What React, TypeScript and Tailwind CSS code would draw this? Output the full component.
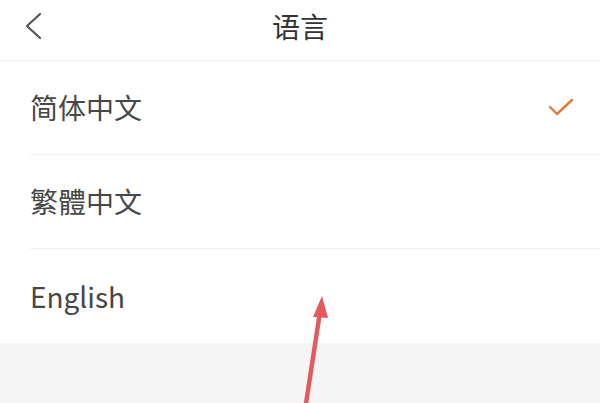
import React from 'react';

const font = { fontFamily: '"Noto Sans CJK SC", "Noto Sans", sans-serif' };

const languages = [
  { label: '简体中文', selected: true },
  { label: '繁體中文', selected: false },
  { label: 'English', selected: false },
];

export default function App() {
  return (
    <div className="relative w-[600px] h-[403px] overflow-hidden bg-[#f5f5f5] text-[#333]" style={font}>
      <div className="bg-white">
        <div className="relative h-[61px] flex items-center justify-center border-b border-[#f2f2f2]">
          <svg className="absolute left-[22px] top-[12px]" width="22" height="28" viewBox="0 0 22 28" fill="none">
            <path d="M18 2 L5 14 L18 26" stroke="#555" strokeWidth="2.2" strokeLinecap="round" strokeLinejoin="round" />
          </svg>
          <span className="text-[28px] leading-none text-[#333] -mt-[9px]">语言</span>
        </div>
        {languages.map((lang, i) => (
          <div key={lang.label} className="pl-[30px]">
            <div
              className={`h-[94px] flex items-center justify-between pr-[26px] ${
                i < languages.length - 1 ? 'border-b border-[#f0f0f0]' : ''
              }`}
            >
              <span className="text-[28px] leading-none text-[#474747] -mt-[1px]">{lang.label}</span>
              {lang.selected && (
                <svg width="26" height="20" viewBox="0 0 26 20" fill="none" className="-mt-[2px]">
                  <path d="M2 10 L9 17 L24 3" stroke="#e8773a" strokeWidth="2.4" strokeLinecap="round" strokeLinejoin="round" />
                </svg>
              )}
            </div>
          </div>
        ))}
      </div>
      <svg className="absolute left-0 top-0 pointer-events-none" width="600" height="403" viewBox="0 0 600 403">
        <line x1="305" y1="410" x2="320" y2="312" stroke="#e35b5e" strokeWidth="4.5" />
        <polygon points="322,296 313,317 328,318" fill="#e35b5e" />
      </svg>
    </div>
  );
}
